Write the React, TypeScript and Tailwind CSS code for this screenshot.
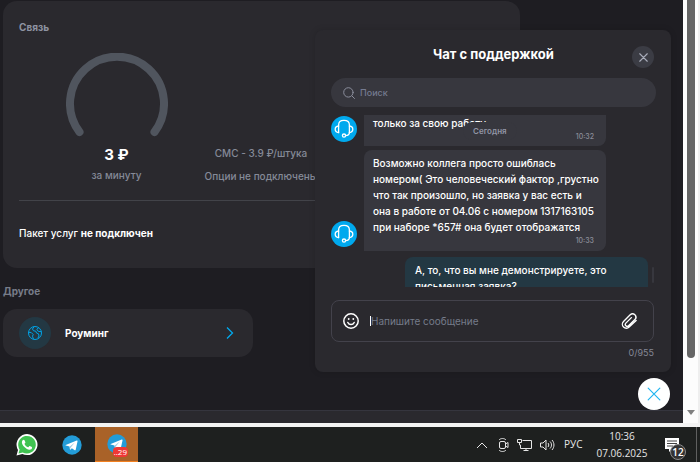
import { useId, useState } from "react";

type Message = {
  id: number;
  lines: string[];
  time?: string;
  own?: boolean;
  clipped?: boolean;
};

const messages: Message[] = [
  { id: 1, lines: ["только за свою работу"], time: "10:32", clipped: true },
  {
    id: 2,
    lines: [
      "Возможно коллега просто ошиблась",
      "номером( Это человеческий фактор ,грустно",
      "что так произошло, но заявка у вас есть и",
      "она в работе от 04.06 с номером 1317163105",
      "при наборе *657# она будет отображатся"
    ],
    time: "10:33"
  },
  { id: 3, lines: ["А, то, что вы мне демонстрируете, это", "письменная заявка?"], own: true }
];

function HeadsetAvatar() {
  return (
    <span className="mb-1 flex size-[26px] shrink-0 items-center justify-center self-end rounded-full bg-[#00a9ee]">
      <svg viewBox="0 0 20 20" className="size-5" fill="none" stroke="white" strokeWidth="1.3" strokeLinecap="round" strokeLinejoin="round">
        <path d="M4.600 13.600V6C4.600 2.800 6.200 1.400 10 1.400S15.400 2.800 15.400 6v7.600" />
        <path d="M4.600 7C2.400 7.200 1.200 8.400 1.200 10.300s1.200 3.100 3.400 3.300M15.400 7c2.200.2 3.400 1.400 3.400 3.300s-1.200 3.100-3.400 3.300" />
        <path d="M15.400 13.600c0 2-1.300 3-3.800 3" />
        <circle cx="10" cy="16.600" r="1.600" />
      </svg>
    </span>
  );
}

function CrossIcon({ className }: { className: string }) {
  return (
    <svg viewBox="0 0 12 12" className={className} fill="none" stroke="currentColor" strokeLinecap="round">
      <path d="M1 1l10 10M11 1L1 11" />
    </svg>
  );
}

function MessageRow({ message }: { message: Message }) {
  if (message.own) {
    return (
      <li className="mt-[2px] mr-2 flex justify-end">
        <div className="w-[243px] rounded-t-lg rounded-bl-lg bg-[#233843] px-[10px] pt-[5px] pb-4 text-[10px] leading-4 font-medium whitespace-nowrap">
          {message.lines.map((line) => (
            <p key={line}>{line}</p>
          ))}
        </div>
      </li>
    );
  }

  return (
    <li className="flex gap-[7px]">
      <HeadsetAvatar />
      <div
        className={
          message.clipped
            ? "w-[242px] rounded-br-lg bg-[#37373e] px-[9px] pb-[3px] text-[10px] leading-4 font-medium whitespace-nowrap"
            : "w-[242px] rounded-t-lg rounded-br-lg bg-[#37373e] px-[9px] pt-[5px] pb-1 text-[10px] leading-4 font-medium whitespace-nowrap"
        }
      >
        {message.lines.map((line) => (
          <p key={line}>{line}</p>
        ))}
        <time className="mr-[3px] block text-right text-[7px] leading-3 text-[#8b8d99]">{message.time}</time>
      </div>
    </li>
  );
}

function SupportChat() {
  const [text, setText] = useState("");
  const searchId = useId();
  const messageId = useId();

  return (
    <aside className="absolute top-[30px] right-3 w-[356px] rounded-lg bg-[#2a292e] pr-[15px] pb-3 pl-4 text-white shadow-[0_0_6px_rgba(0,0,0,0.15)]">
      <header className="relative flex h-12 items-center justify-center">
        <h2 className="pt-[2px] text-[13px] font-bold">Чат с поддержкой</h2>
        <button type="button" aria-label="Закрыть чат" className="absolute top-4 right-[2px] flex size-[22px] items-center justify-center rounded-full bg-[#3b3c44] text-[#a9adba]">
          <CrossIcon className="size-[9px] stroke-[1.5]" />
        </button>
      </header>

      <div className="flex h-[29px] items-center gap-[5px] rounded-full bg-[#37373e] px-3">
        <svg viewBox="0 0 12 12" className="size-3" fill="none" stroke="#8b8e9c" strokeLinecap="round">
          <circle cx="5.400" cy="5.400" r="4.700" />
          <path d="M9 9l2.500 2.500" />
        </svg>
        <label htmlFor={searchId} className="sr-only">Поиск</label>
        <input id={searchId} type="search" placeholder="Поиск" className="min-w-0 flex-1 bg-transparent text-[9px] font-medium outline-none placeholder:text-[#757b90]" />
      </div>

      <div className="relative mt-2 h-[172px] overflow-hidden">
        <span className="absolute top-[7px] left-[132px] rounded-full bg-[#37373e] px-[10px] text-[8px] leading-[18px] font-semibold text-[#9295a5]">Сегодня</span>
        <ul className="-mt-px grid gap-1 pt-px">
          {messages.map((message) => (
            <MessageRow key={message.id} message={message} />
          ))}
        </ul>
        <span className="absolute right-[2px] bottom-1 h-4 w-[2px] rounded-full bg-[#37373e]" />
      </div>

      <div className="mt-[13px] mr-[2px] flex h-[42px] items-center rounded-lg border border-[#43424b] px-[11px]">
        <button type="button" aria-label="Эмодзи">
          <svg viewBox="0 0 16 16" className="size-4" fill="none" stroke="white" strokeWidth="1.500" strokeLinecap="round">
            <circle cx="8" cy="8" r="7.200" />
            <path d="M4.800 9.500c.7 1.400 1.800 2.100 3.200 2.100s2.500-.7 3.200-2.100" />
            <path d="M5.700 5.800v.3M10.300 5.800v.3" strokeWidth="1.800" />
          </svg>
        </button>
        <span className="ml-[11px] h-[10px] w-px bg-white" />
        <label htmlFor={messageId} className="sr-only">Сообщение</label>
        <input
          id={messageId}
          value={text}
          maxLength={955}
          onChange={(event) => setText(event.target.value)}
          placeholder="Напишите сообщение"
          className="min-w-0 flex-1 bg-transparent text-[10px] outline-none placeholder:text-[#757b8a]"
        />
        <button type="button" aria-label="Прикрепить файл" className="mr-1">
          <svg viewBox="0 0 24 24" className="size-[18px]" fill="none" stroke="white" strokeWidth="1.800" strokeLinecap="round" strokeLinejoin="round">
            <path d="M21.500 11.200l-9.300 8.900a5.300 5.300 0 0 1-7.500-7.500l8.900-8.800a4.400 4.400 0 0 1 6.300 6.200l-8.500 8.300a2.500 2.500 0 0 1-3.600-3.500l7.400-7.300" />
          </svg>
        </button>
      </div>
      <p className="mt-1 mr-[2px] text-right text-[9px] leading-[14px] text-[#858896]">{text.length}/955</p>
    </aside>
  );
}

function TariffCard() {
  return (
    <section className="h-[267px] w-full max-w-[517px] rounded-[14px] bg-[#2a292e] px-4 pt-[18px]">
      <h2 className="text-[10px] leading-4 font-bold text-[#8e93a2]">Связь</h2>
      <div className="flex h-[166px] border-b border-[#424349]">
        <div className="flex w-[195px] flex-col items-center pt-[18px]">
          <svg viewBox="0 0 102 84" className="h-[84px] w-[102px]" fill="none" stroke="#50555e" strokeWidth="8" strokeLinecap="round">
            <path d="M13.500 79A47 47 0 1 1 88.500 79" />
          </svg>
          <p className="mt-2 text-[15px] leading-5 font-bold text-white">3 ₽</p>
          <p className="text-[10px] leading-5 font-medium text-[#858a98]">за минуту</p>
        </div>
        <div className="flex w-[94px] flex-col items-center pt-[107px] text-[10px] font-medium whitespace-nowrap text-[#858a98]">
          <p className="leading-[22px]">СМС - 3.9 ₽/штука</p>
          <p className="leading-6">Опции не подключены</p>
        </div>
      </div>
      <p className="mt-6 text-[10px] leading-4 font-medium text-white">
        Пакет услуг <b>не подключен</b>
      </p>
    </section>
  );
}

function TelegramIcon() {
  return (
    <svg viewBox="0 0 20 20" className="size-5">
      <circle cx="10" cy="10" r="9.700" fill="#239cd8" />
      <path d="M3.700 9.900l11-4.300c.6-.2 1 .1.8.8l-1.800 8.400c-.1.600-.5.700-1 .4l-2.800-2-1.400 1.300c-.3.300-.6.200-.6-.2l-.4-2.700-3.700-1.100c-.5-.2-.5-.4-.1-.6z" fill="white" />
      <path d="M7.800 11.600l5-4.200-3.800 4.900-.4 1.800z" fill="#9fcbe4" />
    </svg>
  );
}

function Taskbar() {
  return (
    <footer className="flex h-[35px] shrink-0 items-center bg-[#1e201f] font-['Open_Sans','Noto_Sans',sans-serif] text-white">
      <button type="button" aria-label="WhatsApp" className="flex w-[54px] justify-center">
        <svg viewBox="0 0 22 22" className="size-[22px]">
          <path d="M.5 21.500L2 16A10.500 10.500 0 1 1 6.300 20z" fill="white" />
          <path d="M2.500 19.500l1.100-4A8.800 8.800 0 1 1 6.700 18.400z" fill="#40c351" />
          <path d="M7.700 5.800c-.5 0-1.800.8-1.800 2.500 0 3 4.400 7.400 7.500 7.400 1.600 0 2.700-1 2.700-2.300 0-.5-2.300-1.700-2.700-1.500-.4.200-.9 1.500-1.400 1.300-1.600-.6-2.900-1.900-3.500-3.300-.2-.5.900-.9.900-1.500 0-.4-.8-2.400-1.100-2.500z" fill="white" />
        </svg>
      </button>
      <button type="button" aria-label="Telegram" className="flex w-[35px] justify-center">
        <TelegramIcon />
      </button>
      <button type="button" aria-label="Telegram, 29 новых" className="relative ml-[6px] flex h-full w-[43px] items-center justify-center border-b border-[#f28020] bg-[#a96228]">
        <TelegramIcon />
        <span className="absolute right-[10px] bottom-1 rounded-sm bg-[#ef3835] px-px text-[8px] leading-[10px]">..29</span>
      </button>

      <div className="ml-auto flex h-full items-center text-[#e6e6e6]">
        <svg viewBox="0 0 12 8" className="mr-[9px] h-2 w-3" fill="none" stroke="currentColor">
          <path d="M1 7l5-5 5 5" />
        </svg>
        <svg viewBox="0 0 14 16" className="mr-[6px] h-4 w-[14px]" fill="none" stroke="currentColor">
          <rect x="2.500" y="4.500" width="6" height="7" rx="1.500" />
          <path d="M8.500 7l2.500-1.500v5L8.500 9M2 3c1.600-2 5.400-2 7 0M2 13c1.600 2 5.400 2 7 0" />
        </svg>
        <svg viewBox="0 0 16 14" className="mr-[6px] h-[14px] w-4" fill="none" stroke="currentColor">
          <path d="M5.500 2.500h9v8h-11V7M9 10.500v2M6.500 12.500h5M.5 1.500h4v3h-4zM2.500 4.500V7h1" />
        </svg>
        <svg viewBox="0 0 16 14" className="mr-[9px] h-[14px] w-4" fill="none" stroke="currentColor">
          <path d="M1.500 5v4H4l3 3V2L4 5zM9 5c1 1.200 1 2.800 0 4M11 3.500c2 2 2 5 0 7M13 2c2.600 3 2.600 7 0 10" />
        </svg>
        <span className="w-[30px] text-[10px] font-medium">РУС</span>
        <time className="w-[56px] text-center text-[10px] leading-[17px] font-medium">
          10:36
          <br />
          07.06.2025
        </time>
        <button type="button" aria-label="Уведомления: 12" className="relative mr-4 ml-[14px]">
          <svg viewBox="0 0 16 16" className="size-4">
            <path d="M1 1h14v11H8l-3 3v-3H1z" fill="white" />
            <path d="M3 4h10M3 6.500h10M3 9h6" stroke="#444" />
          </svg>
          <span className="absolute top-[7px] left-[6px] flex size-4 items-center justify-center rounded-full border border-[#8a8a8a] bg-[#333] text-[10px] leading-none font-semibold text-white">12</span>
        </button>
        <span className="mr-[3px] h-full w-px bg-[#606060]" />
      </div>
    </footer>
  );
}

export default function App() {
  return (
    <div className="flex min-h-screen flex-col bg-white font-['Inter','Noto_Sans',sans-serif]">
      <div className="flex flex-1 border-b-4 border-[#f3f3f3]">
        <main className="relative flex min-w-0 flex-1 flex-col overflow-hidden bg-[#1e1d22]">
          <div className="flex-1 px-[3px] pt-px">
            <TariffCard />
            <h2 className="mt-[15px] text-[10px] leading-4 font-bold text-[#777c89]">Другое</h2>
            <a href="#roaming" className="mt-[10px] flex h-12 w-[250px] items-center rounded-[14px] bg-[#2a292e] px-4 text-[10px] font-bold text-white">
              <span className="flex size-8 items-center justify-center rounded-full bg-[#233843]">
                <svg viewBox="0 0 16 16" className="size-4" fill="none" stroke="#00a4e8" strokeLinejoin="round">
                  <circle cx="8" cy="8" r="6.500" />
                  <path d="M7 1.700L5.500 4l1 1.800 2.300.4.700 1.800 2 .8.5 2.200-1.200 2.300M11.700 2.700L9.800 4.300l1.400 2 3.200.4M1.500 7.300l2.700.2 2 2-.7 1.700.9 2.900" />
                </svg>
              </span>
              <span className="ml-[14px] flex-1">Роуминг</span>
              <svg viewBox="0 0 8 12" className="mr-[3px] h-3 w-2" fill="none" stroke="#00a9ee" strokeWidth="1.300">
                <path d="M1 .5L6.500 6 1 11.500" />
              </svg>
            </a>
          </div>
          <div className="h-[13px] border-t border-[#35353e] bg-[#2a292e]" />
          <SupportChat />
          <button type="button" aria-label="Закрыть" className="absolute right-[13px] bottom-[13px] flex size-8 items-center justify-center rounded-full bg-white text-[#20b5f0]">
            <CrossIcon className="size-[14px]" />
          </button>
        </main>
        <div className="flex w-[17px] shrink-0 flex-col items-center justify-between border-r-2 border-[#eeeeee] bg-[#fcfcfc] pb-2">
          <span className="h-[358px] w-2 rounded-b-full bg-[#646464]" />
          <svg viewBox="0 0 8 5" className="h-[5px] w-2" fill="#808080">
            <path d="M0 0h8L4 5z" />
          </svg>
        </div>
      </div>
      <Taskbar />
    </div>
  );
}
